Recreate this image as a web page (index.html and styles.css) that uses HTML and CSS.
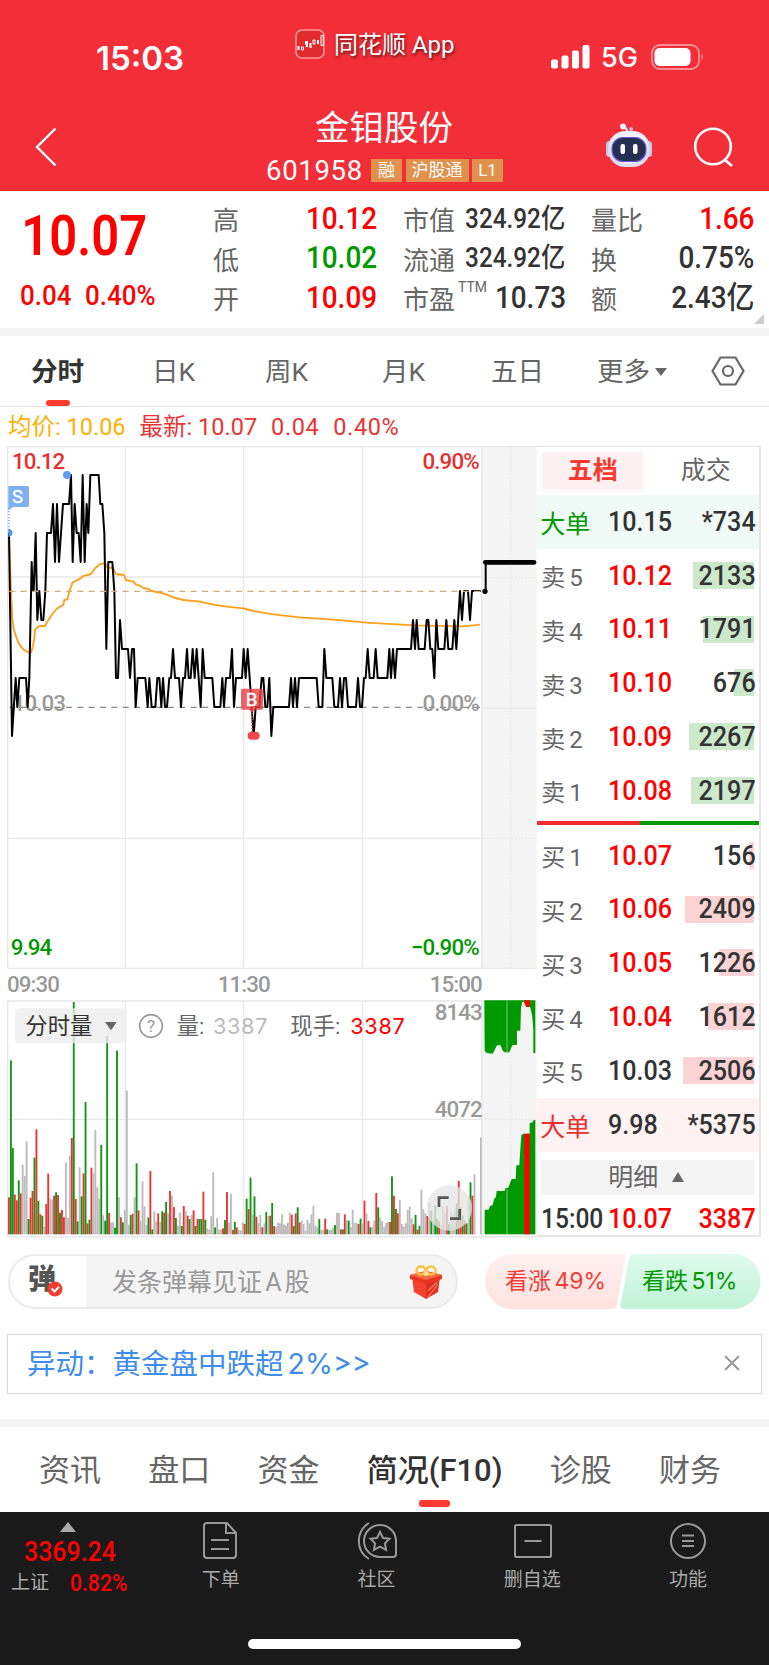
FILE: index.html
```html
<!DOCTYPE html>
<html lang="zh-CN">
<head>
    <meta charset="UTF-8">
    <meta name="viewport" content="width=device-width, initial-scale=1.0">
    <title>金钼股份 601958</title>
    <link rel="stylesheet" href="styles.css">
</head>
<body>
    <header>
        <div class="status-bar">
            <div class="time">15:03</div>
            <div class="app-name">
                <svg width="30" height="30" viewBox="0 0 30 30">
                    <rect x="1" y="1" width="28" height="28" rx="6" fill="#e32a2c" stroke="#f99a9c" stroke-width="1.6"/>
                    <path d="M3.500 17v4M12 13v5M15.500 14v5M23 11v4" stroke="#fff" stroke-width="2"/>
                    <path d="M6.500 18h2v3h-2zM10.500 12.500h2v3h-2zM18 11h2v4h-2zM26 6.500h2.200v10H26z" fill="none" stroke="#fff" stroke-width="1"/>
                </svg>
                <span>同花顺 App</span>
            </div>
            <div class="signal">
                <svg width="39" height="24" viewBox="0 0 39 24" fill="#fff">
                    <rect x="0" y="14.500" width="7" height="9" rx="2"/>
                    <rect x="10.500" y="10.500" width="7" height="13" rx="2"/>
                    <rect x="21" y="5.500" width="7" height="18" rx="2"/>
                    <rect x="31.500" y="0" width="7" height="23.500" rx="2"/>
                </svg>
                <span>5G</span>
                <svg width="54" height="26" viewBox="0 0 54 26">
                    <rect x="1" y="1" width="47" height="24" rx="8" fill="none" stroke="#f98f93" stroke-width="1.800"/>
                    <rect x="3.500" y="4" width="36" height="18" rx="5" fill="#fff"/>
                    <path d="M50.500 9.500q3 3.500 0 7z" fill="#f98f93"/>
                </svg>
            </div>
        </div>
        <div class="title-bar">
            <svg class="back" width="22" height="40" viewBox="0 0 22 40"><path d="M20.500 1.500L2 20l18.500 18.500" fill="none" stroke="#fff" stroke-width="2.400"/></svg>
            <div class="stock-title">
                <h1>金钼股份</h1>
                <div class="code">
                    <span class="code-number">601958</span>
                    <span class="badge">融</span>
                    <span class="badge">沪股通</span>
                    <span class="badge">L1</span>
                </div>
            </div>
            <div class="title-icons">
                <svg width="48" height="46" viewBox="0 0 48 46">
                    <path d="M23 11c-1-4-1-6-4-7" fill="none" stroke="#f0e8f5" stroke-width="2"/>
                    <circle cx="18" cy="3.500" r="3" fill="#f6eefa"/>
                    <circle cx="26" cy="6" r="2" fill="#c9b8e4"/>
                    <rect x="1" y="18" width="7" height="16" rx="3.500" fill="#c3c5ea"/>
                    <rect x="40" y="18" width="7" height="16" rx="3.500" fill="#c3c5ea"/>
                    <rect x="3" y="8" width="42" height="36" rx="17" fill="#dcdcf2"/>
                    <rect x="5" y="8.500" width="38" height="32" rx="16" fill="#f3f2fb"/>
                    <rect x="7" y="14.500" width="34" height="24" rx="11" fill="#24304f" stroke="#6c55d8" stroke-width="1.200"/>
                    <rect x="15.500" y="21" width="4.500" height="10" rx="2" fill="#fff"/>
                    <rect x="28" y="21" width="4.500" height="10" rx="2" fill="#fff"/>
                </svg>
                <svg width="42" height="42" viewBox="0 0 42 42" fill="none" stroke="#fff" stroke-width="2.600"><circle cx="20" cy="19.500" r="17.800"/><path d="M31 32l8 7"/></svg>
            </div>
        </div>
    </header>

    <section class="quote">
        <div class="price">
            <div class="price-now">10.07</div>
            <div class="price-change"><span>0.04</span><span>0.40%</span></div>
        </div>
        <div class="quote-col col-range">
            <div><span>高</span><b class="red">10.12</b></div>
            <div><span>低</span><b class="green">10.02</b></div>
            <div><span>开</span><b class="red">10.09</b></div>
        </div>
        <div class="quote-col col-value">
            <div><span>市值</span><b class="small">324.92亿</b></div>
            <div><span>流通</span><b class="small">324.92亿</b></div>
            <div><span>市盈<sup>TTM</sup></span><b>10.73</b></div>
        </div>
        <div class="quote-col col-ratio">
            <div><span>量比</span><b class="red">1.66</b></div>
            <div><span>换</span><b>0.75%</b></div>
            <div><span>额</span><b>2.43亿</b></div>
        </div>
        <i class="corner"></i>
    </section>

    <nav class="chart-tabs">
        <a class="active"><span>分时</span></a>
        <a>日K</a>
        <a>周K</a>
        <a>月K</a>
        <a>五日</a>
        <a class="more">更多<i></i></a>
        <svg width="34" height="30" viewBox="0 0 34 30" fill="none" stroke="#666" stroke-width="2.200"><path d="M9.500 1.500h15l8 13.500-8 13.500h-15L1.500 15z"/><circle cx="17" cy="15" r="5"/></svg>
    </nav>

    <div class="average-line">
        <span class="avg">均价: 10.06</span>
        <span>最新: 10.07</span>
        <span>0.04</span>
        <span>0.40%</span>
    </div>

    <main>
        <!-- three svg units per css pixel -->
        <svg class="chart" viewBox="0 18 1612 2385">
            <rect x="1445" y="19" width="165" height="1566" fill="#f4f4f4"/>
            <rect x="1445" y="1683" width="165" height="708" fill="#f4f4f4"/>
            <path class="grid" d="M23 20H1610M23 411H1445M23 1195H1445M23 1585H1610M23 1683H1610M23 2038H1445M23 2391H1610M23 20V1585M376 20V1585M731 20V1585M1087 20V1585M1445 20V1585M23 1683V2391M376 1683V2391M731 1683V2391M1087 1683V2391M1445 1683V2391M1445 805H1610"/>
            <path class="grid dotted" d="M1532 20V1585M1532 1683V2383M1445 413H1610M1445 1195H1610M1445 2038H1610"/>
            <path d="M28 802H1443" class="dash" stroke="#8c8c8c"/>
            <g class="axis">
                <text x="38" y="814" fill="#999">10.03</text>
                <text x="1436" y="814" fill="#999" class="end">0.00%</text>
            </g>
            <polyline class="avg-curve" points="27,290 33,450 37,540 42,570 50,595 58,613 70,628 80,635 93,638 99,618 103,595 105,570 112,562 120,558 135,558 142,545 155,525 170,507 180,500 190,495 193,480 202,478 208,455 218,427 230,421 242,415 250,408 268,404 275,400 285,385 300,373 308,370 316,372 322,383 340,384 347,402 372,405 378,420 400,425 408,434 420,437 430,444 442,446 455,453 490,460 520,472 550,480 600,485 640,494 680,500 730,505 760,513 820,523 900,532 1000,539 1100,548 1190,553 1250,556 1390,559 1440,554"/>
            <polyline class="price-curve" id="priceCurve"/>
            <path d="M28 454H1443" class="dash" stroke="#d2ad7c"/>
            <path d="M1457 367V454" stroke="#000" stroke-width="6"/>
            <path d="M1456 367H1602" stroke="#000" stroke-width="14" stroke-linecap="round"/>
            <circle cx="1455" cy="454" r="8"/>
            <g class="axis">
                <text x="36" y="86" fill="#e93030">10.12</text>
                <text x="1436" y="86" fill="#e93030" class="end">0.90%</text>
                <text x="32" y="1545" fill="#090">9.94</text>
                <text x="1436" y="1545" fill="#090" class="end">−0.90%</text>
                <text x="21" y="1655" fill="#999">09:30</text>
                <text x="731" y="1655" fill="#999" class="middle">11:30</text>
                <text x="1445" y="1655" fill="#999" class="end">15:00</text>
                <text x="1445" y="1740" fill="#999" class="end">8143</text>
                <text x="1445" y="2032" fill="#999" class="end">4072</text>
            </g>
            <!-- buy and sell markers -->
            <path d="M27 204V270" stroke="#8bbcf5" stroke-width="5" stroke-dasharray="4 5"/>
            <path d="M25 138H82q5 0 5 5V196q0 5-5 5H40L25 210z" fill="#5f9fee" opacity=".82"/>
            <path d="M25 266a12 12 0 0 1 0 25z" fill="#4f93ea"/>
            <circle cx="201" cy="105" r="12" fill="#5e9dec"/>
            <text x="36" y="190" class="marker">S</text>
            <path d="M756 810V880" stroke="#ef5357" stroke-width="5" stroke-dasharray="4 5"/>
            <path d="M728 746H784q5 0 5 5V804q0 5-5 5H765L756 818 747 809H728q-5 0-5-5V751q0-5 5-5z" fill="#e94246" opacity=".82"/>
            <rect x="743" y="875" width="36" height="24" rx="12" fill="#ee4a4d"/>
            <text x="737" y="798" class="marker">B</text>
            <g id="volume"></g>
            <!-- closing auction -->
            <path fill="#090" d="M1453 1681H1606V1839H1600V1770L1597 1732 1593 1710 1588 1695H1568L1563 1705 1561 1772H1551V1814L1537 1816 1532 1827 1528 1837H1513L1507 1830 1502 1816H1491L1484 1830 1478 1841 1460 1839 1454 1832z"/>
            <path fill="#090" d="M1454 2383V2309H1466L1470 2298 1478 2295 1482 2278 1488 2270 1490 2253H1514L1516 2245 1525 2243 1530 2230 1535 2217H1547L1549 2176H1558L1560 2143 1564 2085 1572 2081H1589V2050L1598 2047 1601 2040H1606V2383z"/>
            <path fill="#f4f4f4" d="M1563 1705L1567 1686H1572L1577 1702 1588 1706 1590 1716H1563z"/>
            <path fill="#f00" d="M1572 1681H1590V1701H1578zM1573 2081H1589V2383H1573z"/>
            <path d="M1521 1681V1839M1521 2248V2383" stroke="#7cc67c" stroke-width="3"/>
            <!-- volume legend -->
            <rect x="45" y="1705" width="331" height="105" rx="12" fill="#ededed" opacity=".8"/>
            <g class="legend">
                <text x="76" y="1783" fill="#333">分时量</text>
                <text x="530" y="1781" fill="#666">量:</text>
                <text x="639" y="1781" fill="#bbb" class="wide">3387</text>
                <text x="871" y="1781" fill="#666">现手:</text>
                <text x="1051" y="1781" fill="#f00" class="wide">3387</text>
            </g>
            <path d="M315 1746H350L333 1771z" fill="#666"/>
            <circle cx="453" cy="1758" r="34" fill="none" stroke="#999" stroke-width="5"/>
            <text x="453" y="1776" class="help">?</text>
            <circle cx="1348" cy="2304" r="68" fill="#e6e6e6" opacity=".78"/>
            <path d="M1317 2301V2273H1346M1350 2336H1379V2307" fill="none" stroke="#555" stroke-width="8"/>
        </svg>

        <aside class="order-book">
            <div class="book-tabs"><span class="active">五档</span><span>成交</span></div>
            <div class="row big sell-big"><span>大单</span><b>10.15</b><em>*734</em></div>
            <div class="row sell"><span>卖 5</span><b class="red">10.12</b><em>2133</em><i style="width:61px"></i></div>
            <div class="row sell"><span>卖 4</span><b class="red">10.11</b><em>1791</em><i style="width:51px"></i></div>
            <div class="row sell"><span>卖 3</span><b class="red">10.10</b><em>676</em><i style="width:20px"></i></div>
            <div class="row sell"><span>卖 2</span><b class="red">10.09</b><em>2267</em><i style="width:65px"></i></div>
            <div class="row sell"><span>卖 1</span><b class="red">10.08</b><em>2197</em><i style="width:63px"></i></div>
            <div class="ratio"></div>
            <div class="row buy"><span>买 1</span><b class="red">10.07</b><em>156</em><i style="width:5px"></i></div>
            <div class="row buy"><span>买 2</span><b class="red">10.06</b><em>2409</em><i style="width:69px"></i></div>
            <div class="row buy"><span>买 3</span><b class="red">10.05</b><em>1226</em><i style="width:35px"></i></div>
            <div class="row buy"><span>买 4</span><b class="red">10.04</b><em>1612</em><i style="width:46px"></i></div>
            <div class="row buy"><span>买 5</span><b>10.03</b><em>2506</em><i style="width:71px"></i></div>
            <div class="row big buy-big"><span>大单</span><b>9.98</b><em>*5375</em></div>
            <div class="detail">明细<i></i></div>
            <div class="row last"><span>15:00</span><b class="red">10.07</b><em class="red">3387</em></div>
        </aside>
    </main>

    <section class="barrage">
        <div class="barrage-input">
            <div class="barrage-icon">弹
                <svg width="16" height="16" viewBox="0 0 16 16"><circle cx="8" cy="8" r="7.500" fill="#f43c34"/><path d="M4.500 7.500l3 3L12 5.800" fill="none" stroke="#fff" stroke-width="2"/></svg>
            </div>
            <span>发条弹幕见证 A 股</span>
            <svg width="32" height="34" viewBox="0 0 32 34">
                <path d="M2 12l14 5v17L4 27z" fill="#f4402c"/>
                <path d="M30 12l-14 5v17l12-7z" fill="#df2f20"/>
                <path d="M0 10l16-4 16 4v4l-16 5L0 14z" fill="#e8351f"/>
                <path d="M0 10l16-4 16 4-16 5z" fill="#fb6a45"/>
                <path d="M18 32l10-13M18 26l9-9" stroke="#ff7c5c" stroke-width="1.200"/>
                <ellipse cx="11" cy="5.500" rx="4.500" ry="4" fill="none" stroke="#f9c33c" stroke-width="2.400"/>
                <ellipse cx="21" cy="5.500" rx="4.500" ry="4" fill="none" stroke="#f9c33c" stroke-width="2.400"/>
                <circle cx="16" cy="8.500" r="2.500" fill="#ffe08a"/>
            </svg>
        </div>
        <div class="vote">
            <svg width="276" height="56" viewBox="0 0 276 56">
                <defs>
                    <linearGradient id="up" x2="0" y2="1"><stop stop-color="#fff0ef"/><stop offset="1" stop-color="#ffe2e0"/></linearGradient>
                    <linearGradient id="down" x2="0" y2="1"><stop stop-color="#e0faee"/><stop offset="1" stop-color="#bff3d6"/></linearGradient>
                </defs>
                <path d="M27.500 0H137q4 0 3 4L132 51q-1 4-5 4H27.500a27.500 27.500 0 0 1 0-55z" fill="url(#up)"/>
                <path d="M149 0H248a27.500 27.500 0 0 1 0 55H139q-4 0-3.500-4L144 4q1-4 5-4z" fill="url(#down)"/>
            </svg>
            <span class="vote-up">看涨 49%</span>
            <span class="vote-down">看跌 51%</span>
        </div>
    </section>

    <div class="notice">
        <span>异动：黄金盘中跌超 2%&gt;&gt;</span>
        <svg width="16" height="16" viewBox="0 0 16 16" stroke="#999" stroke-width="2"><path d="M1 1l14 14M15 1L1 15"/></svg>
    </div>

    <nav class="info-tabs">
        <a>资讯</a>
        <a>盘口</a>
        <a>资金</a>
        <a class="active">简况(F10)</a>
        <a>诊股</a>
        <a>财务</a>
    </nav>

    <footer>
        <div class="toolbar">
            <div class="index">
                <i></i>
                <strong>3369.24</strong>
                <div><span>上证</span><b>0.82%</b></div>
            </div>
            <div class="tool">
                <svg width="40" height="38" viewBox="0 0 40 38"><path d="M6 1h20l9 10v22q0 3-3 3H6q-3 0-3-3V4q0-3 3-3z"/><path d="M25 1v10h10M10 18h18M10 27h18"/></svg>
                <span>下单</span>
            </div>
            <div class="tool">
                <svg width="40" height="38" viewBox="0 0 40 38"><path d="M39 19v13q0 3-3 3H23a16 16 0 1 1 16-16zM12 1a21 21 0 0 0 0 36"/><path d="M23 10l3 6 6.500.800-4.600 4.500 1.200 6.600L23 24.700l-6.100 3.200 1.200-6.600-4.600-4.500L20 16z"/></svg>
                <span>社区</span>
            </div>
            <div class="tool">
                <svg width="40" height="38" viewBox="0 0 40 38"><rect x="3" y="3" width="36" height="32" rx="1.500"/><path d="M12.500 19h17"/></svg>
                <span>删自选</span>
            </div>
            <div class="tool">
                <svg width="40" height="38" viewBox="0 0 40 38"><circle cx="20" cy="19" r="17"/><path d="M14 13.500h12M14 19h12M14 24h12"/></svg>
                <span>功能</span>
            </div>
        </div>
        <div class="home-bar"></div>
    </footer>

    <script src="chart.js"></script>
</body>
</html>
```
FILE: styles.css
```css
* {
    box-sizing: border-box;
}
body {
    margin: 0;
    width: 769px;
    font-family: Roboto, "Noto Sans CJK SC", sans-serif;
    background-color: #fff;
    color: #333;
}
i, em {
    font-style: normal;
}
.red {
    color: #f00;
}
.green {
    color: #090;
}

/* header */
header {
    height: 191px;
    background-color: #f22f38;
    color: #fff;
}
.status-bar {
    height: 95px;
    display: grid;
    grid-template-columns: 295px 256px 1fr;
}
.time {
    padding: 38px 0 0 96px;
    font: 600 33px/40px Inter, sans-serif;
}
.app-name {
    display: flex;
    align-items: center;
    height: 30px;
    margin-top: 29px;
    font-size: 24px;
    gap: 9px;
    white-space: nowrap;
    text-shadow: 1px 2px 3px rgba(0, 0, 0, 0.6);
}
.app-name span {
    padding-bottom: 3px;
}
.signal {
    display: flex;
    align-items: center;
    height: 26px;
    margin-top: 44px;
    font: 500 27px Inter, sans-serif;
}
.signal span {
    margin: 0 13px 0 11px;
}
.title-bar {
    height: 96px;
    display: grid;
    grid-template-columns: 266px 339px 1fr;
}
.back {
    margin: 32px 0 0 35px;
}
.stock-title h1 {
    margin: 13px 0 0 49px;
    font-size: 34.5px;
    line-height: 40px;
    font-weight: 400;
}
.code {
    display: flex;
    align-items: center;
    height: 34px;
    gap: 3.5px;
    margin-top: 5px;
}
.code-number {
    width: 101.5px;
    font-size: 27.5px;
    letter-spacing: 0.7px;
}
.badge {
    min-width: 31px;
    height: 23px;
    padding: 0 6px;
    background-color: #e0914b;
    font-size: 17px;
    line-height: 23px;
    text-align: center;
}
.title-icons {
    display: flex;
    align-items: flex-start;
    padding-top: 28px;
    gap: 40px;
}
.title-icons svg:last-child {
    margin-top: 4px;
}

/* quote */
.quote {
    position: relative;
    height: 145px;
    display: flex;
    border-bottom: 8px solid #f4f4f4;
}
.price {
    width: 213px;
    color: #f00;
}
.price-now {
    padding: 13px 0 0 24px;
    font-size: 55px;
    line-height: 64px;
    font-weight: 600;
    transform: scaleX(0.89);
    transform-origin: left;
}
.price-change {
    display: flex;
    gap: 15px;
    padding: 11px 0 0 22px;
    font-size: 28.5px;
    line-height: 34px;
    font-weight: 500;
    transform: scaleX(0.91);
    transform-origin: left;
}
.quote-col {
    padding-top: 8px;
}
.quote-col div {
    display: flex;
    justify-content: space-between;
    align-items: center;
    height: 39.5px;
}
.quote-col span {
    font-size: 26px;
    color: #666;
    white-space: nowrap;
}
.quote-col b {
    font-size: 31px;
    line-height: 36px;
    font-weight: 500;
    white-space: nowrap;
    transform: scaleX(0.9);
    transform-origin: right;
}
/* the label keeps its own width, the number may run wider than its slot */
.quote-col b.small {
    font-size: 27px;
    margin-left: -20px;
}
.quote-col sup {
    font-size: 14px;
    line-height: 0;
    vertical-align: 17px;
    margin-left: 3px;
}
.col-range {
    width: 164px;
}
.col-value {
    width: 162px;
    margin-left: 26px;
}
.col-ratio {
    width: 163px;
    margin-left: 26px;
}
.corner {
    position: absolute;
    right: 5px;
    bottom: 4px;
    border-left: 10px solid transparent;
    border-bottom: 10px solid #ccc;
}

/* chart tabs */
.chart-tabs {
    height: 71px;
    display: grid;
    grid-template-columns: 121px 113px 117px 109px 106px 114px 34px;
    align-items: center;
    padding-left: 31px;
    border-bottom: 1px solid #e6e6e6;
    font-size: 26.5px;
    color: #666;
}
.chart-tabs a {
    height: 70px;
    line-height: 72px;
}
.chart-tabs .active {
    position: relative;
    width: 53px;
    color: #333;
    font-weight: 700;
}
.active::after {
    content: "";
    position: absolute;
    left: 50%;
    bottom: 0;
    width: 24px;
    height: 6px;
    margin-left: -12px;
    border-radius: 3px;
    background-color: #fb3a31;
}
.more i {
    display: inline-block;
    margin: 0 0 5px 5px;
    border: 6.5px solid transparent;
    border-top: 8px solid #666;
    border-bottom: 0;
}
.average-line {
    height: 39px;
    display: flex;
    gap: 14px;
    padding-left: 8px;
    color: #e93434;
    font-size: 23.5px;
    line-height: 40px;
}
.average-line .avg {
    color: #fcb104;
}
.average-line span:nth-child(n+3) {
    letter-spacing: 0.6px;
}

/* chart */
main {
    display: flex;
    height: 795px;
}
.chart {
    width: 537.33px;
    height: 795px;
    flex: none;
}
.grid {
    fill: none;
    stroke: #e8e8e8;
    stroke-width: 4;
}
.dotted {
    stroke-dasharray: 5 5;
}
.dash {
    stroke-width: 3.5;
    stroke-dasharray: 18 16;
}
.avg-curve, .price-curve {
    fill: none;
    stroke: #ff9f1a;
    stroke-width: 5.5;
    stroke-linejoin: round;
}
.price-curve {
    stroke: #000;
    stroke-width: 6;
}
.axis {
    font-size: 67px;
    font-weight: 500;
    letter-spacing: -2.8px;
}
.end {
    text-anchor: end;
}
.middle {
    text-anchor: middle;
}
.marker {
    font-size: 56px;
    fill: #fff;
    stroke: #fff;
}
.legend {
    font-size: 67px;
}
.wide {
    font-family: Inter, sans-serif;
    font-size: 65px;
    letter-spacing: 2px;
}
.help {
    font-size: 52px;
    fill: #999;
    text-anchor: middle;
}
.bar-r {
    fill: #eb3333;
}
.bar-g {
    fill: #0f9613;
}
.bar-a {
    fill: #bbb;
}

/* order book */
.order-book {
    width: 223.67px;
    height: 791px;
    border: 1px solid #e6e6e6;
    border-right-width: 2px;
    border-bottom-width: 2px;
    border-left: 0;
}
.book-tabs {
    display: flex;
    height: 48px;
    padding: 5px 0 5px 5px;
    color: #666;
    font-size: 25px;
    line-height: 38px;
    text-align: center;
}
.book-tabs span {
    flex: 1;
    padding-left: 9px;
}
.book-tabs span.active {
    flex: 0 0 101px;
    padding: 0;
    border-radius: 4px;
    background-color: #fff1f1;
    color: #fb3a31;
    font-weight: 700;
}
.book-tabs .active::after {
    display: none;
}
.row {
    position: relative;
    display: grid;
    grid-template-columns: 67px 70px 1fr;
    align-items: center;
    height: 53.8px;
    padding: 0 3px 0 4px;
    font-size: 27px;
    white-space: nowrap;
}
.row span {
    font-size: 24px;
    color: #666;
    word-spacing: -2px;
}
.row b, .row em {
    position: relative;
    z-index: 1;
    font-weight: 500;
    transform: scaleX(0.93);
    transform-origin: left;
}
.row em {
    text-align: right;
    transform-origin: right;
}
.row i {
    position: absolute;
    right: 5px;
    top: 13px;
    height: 27px;
}
.sell i {
    background-color: #cce9cc;
}
.buy i {
    background-color: #fbd3d5;
}
.row.big span {
    margin-left: -1px;
    font-size: 25px;
    color: #090;
}
.sell-big {
    background-color: #f0faf6;
}
.buy-big {
    background-color: #fff2f2;
}
.row.buy-big span {
    color: #e93030;
}
.ratio {
    height: 4px;
    margin: 3px 0 4px;
    background: linear-gradient(to right, #ef2b30 46.5%, #090 46.5%);
}
.detail {
    display: flex;
    justify-content: center;
    align-items: center;
    height: 35px;
    margin: 8px 4px 6px;
    padding-right: 4px;
    background-color: #f4f4f4;
    color: #666;
    font-size: 25px;
    line-height: 33px;
    gap: 14px;
}
.detail i {
    border: 6.5px solid transparent;
    border-bottom: 10px solid #666;
    border-top: 0;
}
.row.last {
    height: 36px;
}
.row.last span {
    color: #333;
    font-size: 27px;
    font-weight: 500;
    transform: scaleX(0.91);
    transform-origin: left;
}

/* barrage */
.barrage {
    display: flex;
    justify-content: space-between;
    padding: 13px 8px 0;
}
.barrage-input {
    display: flex;
    align-items: center;
    width: 450px;
    height: 55px;
    padding-right: 14px;
    border: 2px solid #ebebeb;
    border-radius: 28px;
    background-color: #f4f4f4;
    color: #999;
    font-size: 25px;
    overflow: hidden;
}
.barrage-input > span {
    flex: 1;
    padding-bottom: 4px;
    word-spacing: -3px;
}
.barrage-icon {
    position: relative;
    width: 76px;
    height: 55px;
    margin-right: 26px;
    padding-left: 18px;
    background-color: #fff;
    color: #555;
    font-size: 28px;
    line-height: 52px;
    font-weight: 900;
}
.barrage-icon svg {
    position: absolute;
    left: 37px;
    top: 27px;
}
.vote {
    position: relative;
    width: 276px;
    height: 56px;
    font-family: Inter, "Noto Sans CJK SC", sans-serif;
    font-size: 23px;
    line-height: 55px;
    word-spacing: -3px;
}
.vote span {
    position: absolute;
    top: 0;
    left: 20px;
    color: #f43c36;
}
.vote .vote-down {
    left: 157px;
    color: #090;
}
.notice {
    display: flex;
    justify-content: space-between;
    align-items: center;
    height: 60px;
    margin: 24px 7px 25px;
    padding: 0 21px 2px 19px;
    border: 1.5px solid #d9d9d9;
    color: #3e8cec;
    font-family: Inter, "Noto Sans CJK SC", sans-serif;
    font-size: 28.5px;
    word-spacing: -4px;
}
.notice span {
    padding-bottom: 3px;
}

/* info tabs */
.info-tabs {
    height: 93px;
    display: flex;
    justify-content: space-between;
    padding: 0 48px 0 39px;
    border-top: 8px solid #f4f4f4;
    color: #666;
    font-size: 31px;
    line-height: 88px;
}
.info-tabs .active {
    position: relative;
    color: #333;
    font-weight: 500;
}
.info-tabs .active::after {
    width: 31px;
    height: 7px;
    margin-left: -16px;
    bottom: 5px;
}

/* footer */
footer {
    height: 153px;
    background-color: #1a1a1a;
    color: #aaa;
}
.toolbar {
    height: 127px;
    display: flex;
}
.index {
    width: 143px;
    padding: 10px 0 0 11px;
    color: #f00;
}
.index i {
    display: block;
    width: 0;
    margin-left: 49px;
    border: 8.5px solid transparent;
    border-bottom: 10px solid #aaa;
    border-top: 0;
}
.index strong {
    display: block;
    margin-left: 13px;
    font-size: 28px;
    line-height: 39px;
    font-weight: 500;
    transform: scaleX(0.89);
    transform-origin: left;
}
.index div {
    display: flex;
    gap: 21px;
    line-height: 24px;
    font-size: 24px;
}
.index span {
    color: #aaa;
    font-size: 19px;
}
.index b {
    font-weight: 500;
    transform: scaleX(0.88);
    transform-origin: left;
}
.tool {
    width: 155.7px;
    padding-top: 10px;
    display: flex;
    flex-direction: column;
    align-items: center;
    font-size: 19px;
    line-height: 39px;
}
.tool svg {
    fill: none;
    stroke: #999;
    stroke-width: 2;
}
.home-bar {
    width: 273px;
    height: 10px;
    margin-left: 248px;
    border-radius: 5px;
    background-color: #fff;
}
```
FILE: chart.js
```js
// x position and number of cents above 10.03
const prices = '27,6 36,-1 47,1 52,0 58,1 78,1 83,0 88,1 95,5 98,4 101,4 107,6 112,3 118,4 124,3 130,3 136,4 141,6 153,6 159,7 165,5 171,7 177,5 183,6 189,7 207,7 213,8 218,5 224,7 230,6 236,6 242,5 248,8 254,5 260,7 265,6 271,8 296,8 301,7 307,7 313,6 319,2 325,5 337,5 343,4 348,1 354,1 360,3 366,2 384,2 390,1 396,2 402,2 407,0 413,1 436,1 443,0 448,1 455,0 466,0 472,1 478,1 484,0 489,1 495,0 501,0 508,1 513,1 519,2 525,1 537,1 543,0 549,1 555,1 561,2 566,1 572,1 578,2 584,1 590,2 602,0 608,2 614,1 637,1 643,0 661,0 667,1 672,0 678,1 690,1 696,2 702,0 708,1 726,1 731,2 737,1 743,2 749,1 755,0 761,-1 767,0 778,0 785,1 790,1 796,0 802,0 808,1 814,-1 820,0 867,0 873,1 879,0 885,1 891,0 897,1 950,1 956,0 967,0 973,2 979,1 997,1 1003,0 1014,0 1020,1 1026,0 1032,1 1038,1 1044,0 1068,0 1074,1 1080,0 1086,0 1092,1 1097,1 1103,2 1109,1 1121,1 1127,2 1133,1 1162,1 1168,2 1173,1 1179,2 1185,1 1191,2 1233,2 1239,3 1245,2 1250,3 1256,2 1274,2 1280,3 1285,3 1291,2 1297,2 1303,1 1309,3 1315,2 1333,2 1339,3 1345,2 1357,2 1363,3 1369,2 1380,4 1386,3 1392,4 1404,4 1410,3 1416,4 1442,4';

document.getElementById('priceCurve').setAttribute('points', prices.split(' ').map(p => {
    const [x, cents] = p.split(',');
    return `${x},${801 - cents * 87}`;
}).join(' '));

// colour (r up, g down, a flat) and bar top, the base line is at 913
const volumes = 'r802 g391 g654 r794 r811 g751 r790 a704 a738 a634 g867 r803 r783 g683 r598 g813 r853 g857 a890 r822 r731 a806 a809 r797 g787 r795 g848 r840 r862 a697 a864 a677 r624 g216 r807 g874 a712 g799 r730 g516 r880 g869 r713 a730 a600 a772 a805 g645 a856 g872 g318 r849 a877 a877 g893 g362 a802 r862 g877 a840 a481 a884 g855 r851 a802 g700 r841 a872 a754 a829 a885 g862 r723 g898 a844 a874 r850 a876 g844 r848 g816 a850 r783 a797 r831 g864 a886 a848 g888 r828 a843 r857 g867 a855 r841 g888 r867 g867 g867 r785 g869 a895 a899 a859 a727 g892 a864 a899 a899 r895 g870 r786 a878 a792 r900 g876 r892 a900 a901 a877 r882 g806 r837 g743 a853 g799 r860 a879 a855 r892 a880 g846 a858 r857 g819 r888 a890 a878 a880 a853 a884 a886 a878 a848 r854 g888 r850 g832 r877 a872 a882 a903 a869 a880 a853 a827 a887 a891 g867 a899 a898 r866 g898 a900 a899 a893 g885 a849 a849 r898 g898 r853 a870 g872 a891 a839 a879 a879 r882 g866 a880 r812 a850 r873 g892 a890 a871 r789 g832 a862 a873 a892 a879 a876 r876 g739 r797 g837 r850 a810 a882 a890 a880 a840 a830 a865 r883 g855 r899 g888 a779 a837 a850 r858 a818 g841 a870 g826 g866 r873 a885 a829 a850 r829 g883 a845 a853 a838 g822 r753 r832 g857 r870 g880 a800 g757 r797 a733';

const bars = volumes.split(' ').map((v, i) => {
    const top = Number(v.slice(1));
    return `<rect class="bar-${v[0]}" x="${24 + i * 5.893}" y="${1470 + top}" width="5.6" height="${913 - top}"/>`;
});
bars.push('<rect class="bar-a" x="1440" y="2092" width="5" height="291"/>');
document.getElementById('volume').innerHTML = bars.join('');
```
